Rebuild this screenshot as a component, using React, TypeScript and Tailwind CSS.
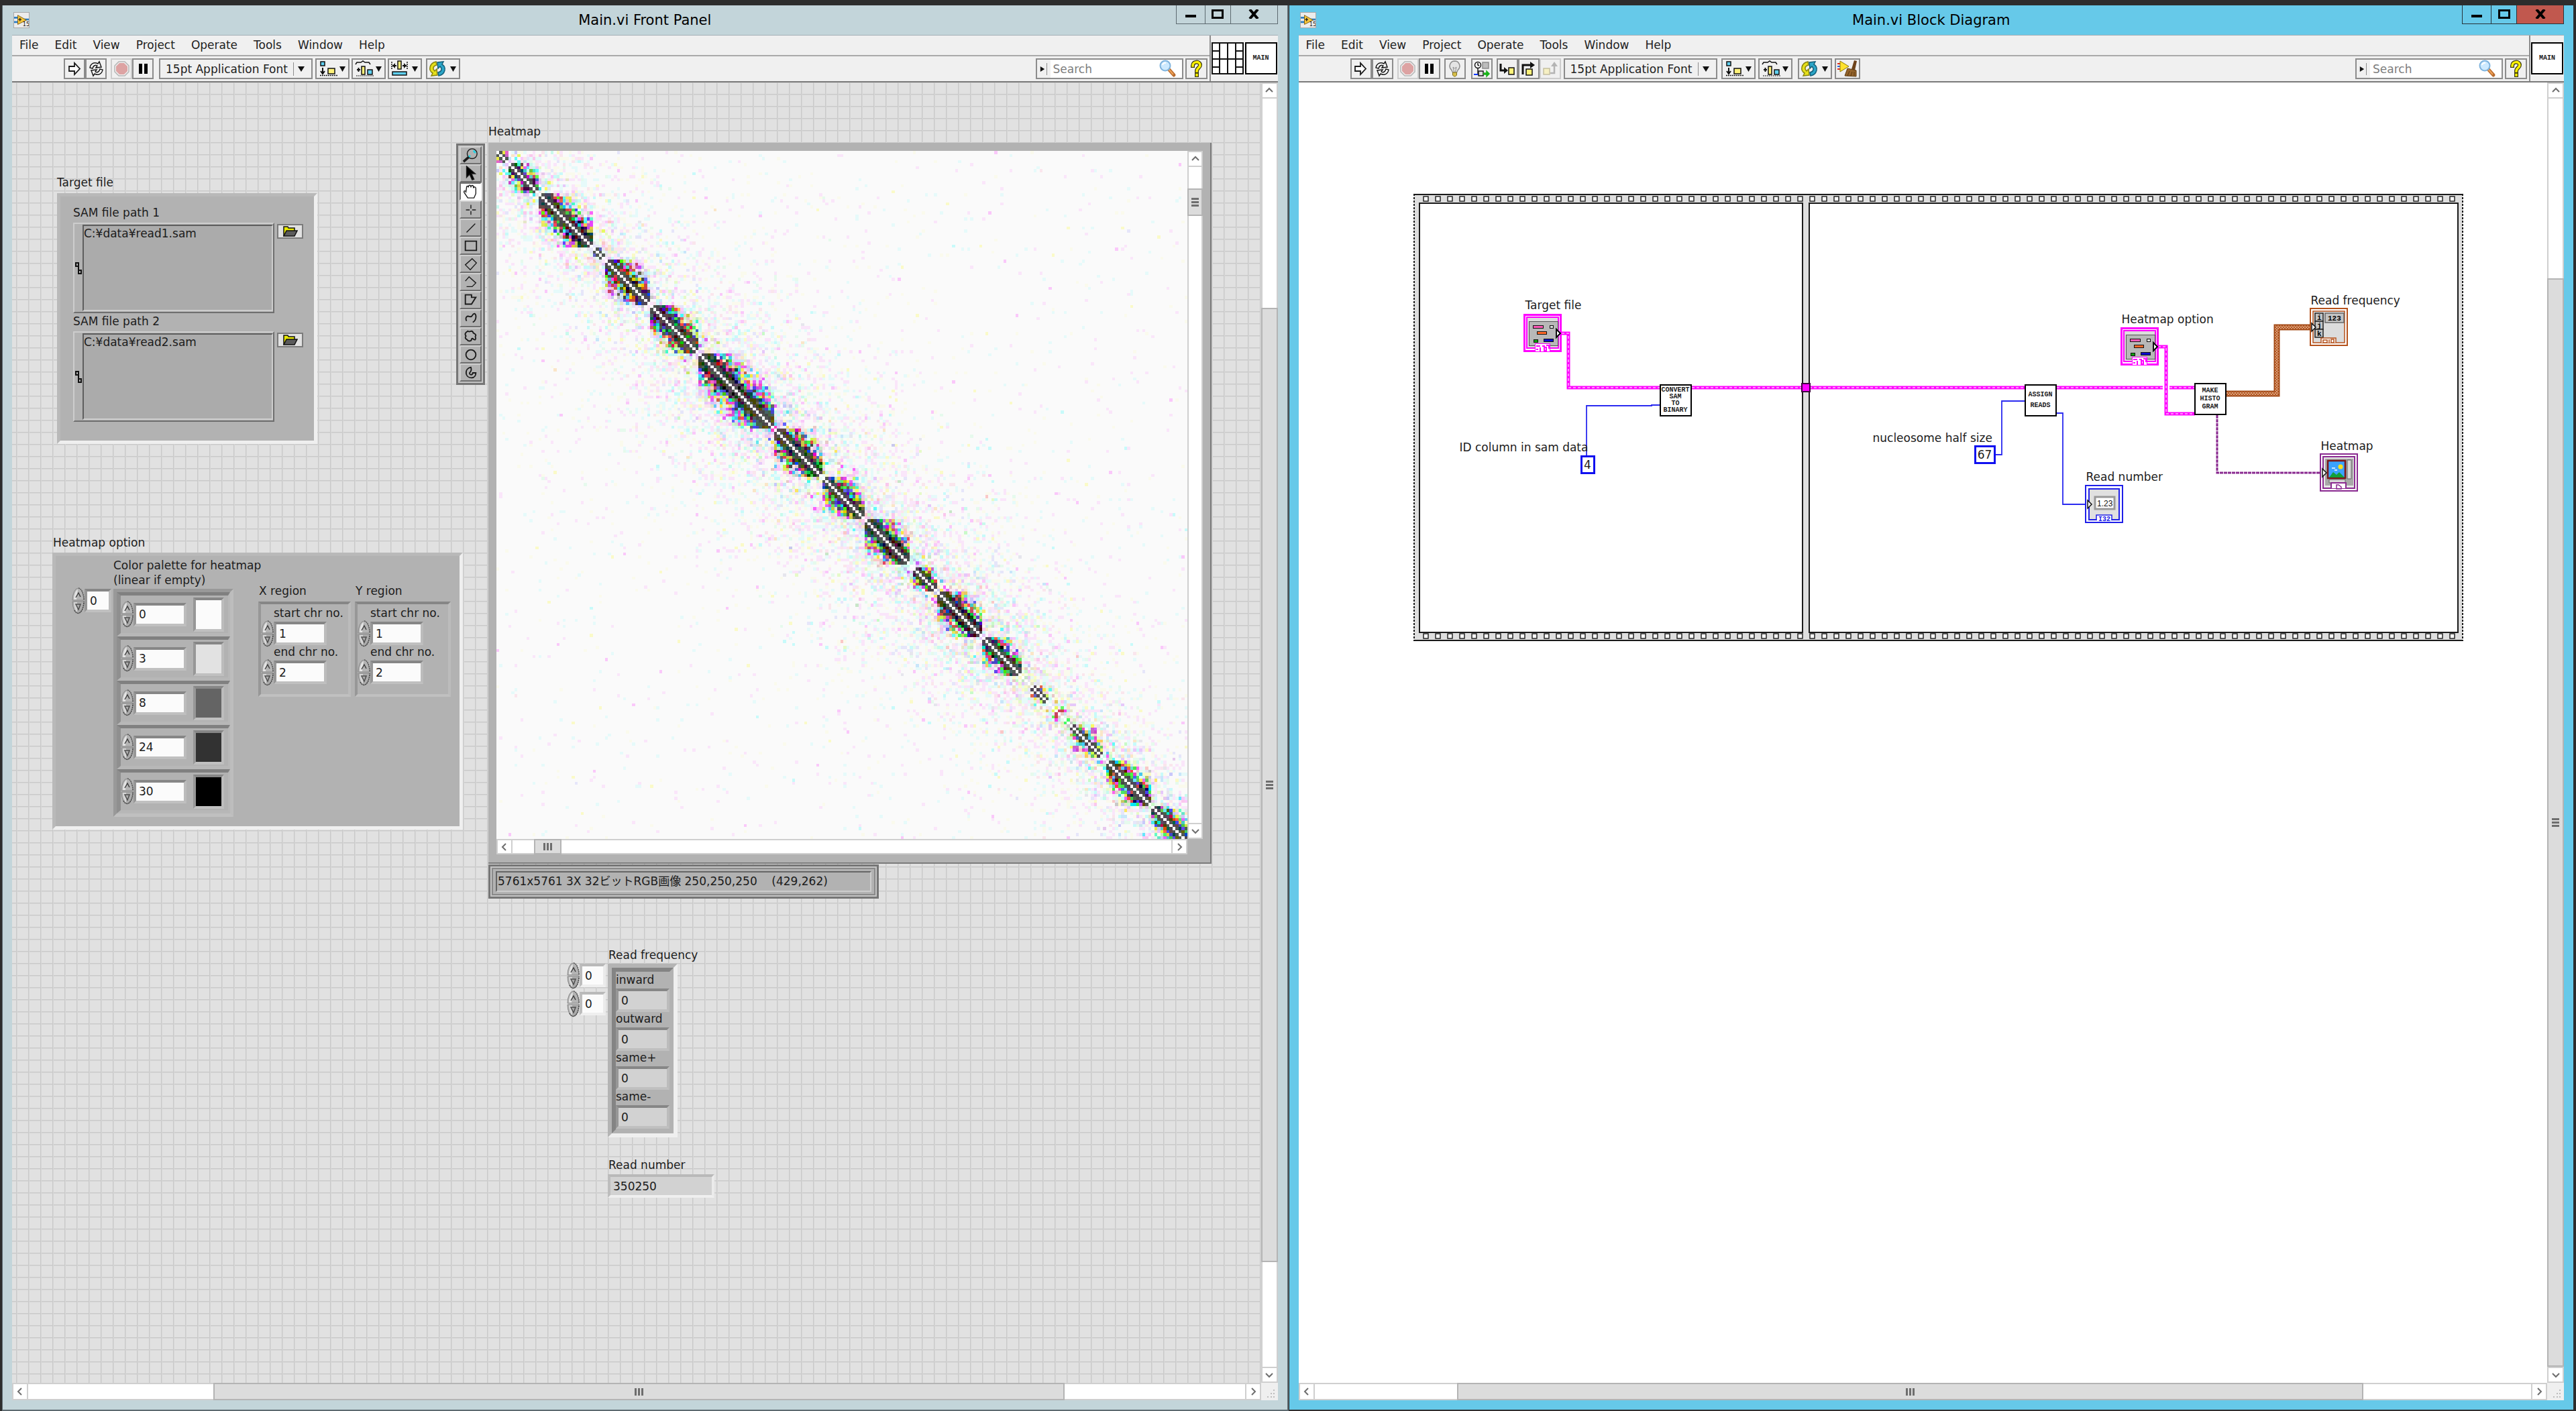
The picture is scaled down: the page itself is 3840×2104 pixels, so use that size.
import React, { useMemo } from "react";

type Kids = { children?: React.ReactNode };

/* ---------- heat map ---------- */

const COLS = 229;
const ROWS = 228;
const BLOCKS: [number, number, number][] = [
  [0, 3, 0.6], [4, 13, 0.9], [14, 31, 1], [32, 35, 0.5], [36, 50, 0.9], [51, 66, 0.9],
  [67, 91, 1.2], [92, 107, 1.1], [108, 121, 0.9], [122, 136, 1.25], [138, 145, 0.9],
  [146, 160, 1.2], [161, 173, 0.9], [177, 182, 0.5], [184, 189, 0.2], [190, 200, 0.5],
  [202, 216, 0.8], [217, 228, 0.9],
];

function makeRandom(seed: number) {
  let s = seed;
  return () => {
    s = (s + 0x6d2b79f5) | 0;
    let t = Math.imul(s ^ (s >>> 15), 1 | s);
    t = (t + Math.imul(t ^ (t >>> 7), 61 | t)) ^ t;
    return ((t ^ (t >>> 14)) >>> 0) / 4294967296;
  };
}

function level(v: number) {
  if (v < 1) return 250;
  if (v < 3) return 230;
  if (v < 6) return 200;
  if (v < 9) return 100;
  if (v < 26) return 70;
  return 4;
}

function buildHeatmap() {
  const rnd = makeRandom(42);
  const paths = new Map<string, string>();
  const put = (x: number, y: number, c: string) => {
    if (x < COLS && y < ROWS) paths.set(c, (paths.get(c) ?? "") + `M${x} ${y}h1v1h-1z`);
  };
  const blockOf = (i: number) => BLOCKS.findIndex(([a, b]) => i >= a && i <= b);
  for (let i = 0; i < COLS; i++) {
    for (let j = i; j < COLS; j++) {
      const d = j - i;
      const bi = blockOf(i);
      const same = bi >= 0 && bi === blockOf(j);
      if (d === 0) {
        put(i, i, "#ffffff");
        continue;
      }
      const mid = (i + j) / 2;
      const busy = mid > 60 && mid < 170 ? 1.4 : 0.9;
      let lam = 0.21 + 0.8 * busy * Math.exp(-d / 22) + 1.1 * Math.exp(-d / 7);
      if (same) {
        const [a, b, w] = BLOCKS[bi];
        const spread = Math.min(b - a, 15) * 0.2 + 1;
        lam += 29 * w * Math.exp(-Math.pow(d / spread, 1.2));
      }
      const rgb = [0, 1, 2].map((n) => {
        const u = -Math.log(1 - rnd() * 0.9999);
        let v = level(lam * (lam > 14 ? 0.3 + 0.7 * u : u));
        if (v === 230 && rnd() < 0.08) v = 200;
        return n === 2 && v === 230 ? 237 : v;
      });
      if (d === 1 && same && BLOCKS[bi][2] > 0.3) {
        rgb[0] = 82; rgb[1] = 72 + Math.floor(rnd() * 2) * 16; rgb[2] = 84;
      }
      if (rgb[0] === 250 && rgb[1] === 250 && rgb[2] === 250) continue;
      const c = `rgb(${rgb.join(",")})`;
      put(j, i, c);
      put(i, j, c);
    }
  }
  return [...paths.entries()];
}

function HeatmapImage() {
  const cells = useMemo(buildHeatmap, []);
  return (
    <svg role="img" aria-label="Heatmap" viewBox={`0 0 ${COLS} ${ROWS}`} preserveAspectRatio="none" shapeRendering="crispEdges" className="block h-[1026px] w-[1030px] bg-[#fafafa]">
      {cells.map(([c, d]) => (
        <path key={c} d={d} fill={c} />
      ))}
    </svg>
  );
}

/* ---------- scroll bars ---------- */

function Chevron({ dir }: { dir: "up" | "down" | "left" | "right" }) {
  const d = {
    up: "M2 9 L7 4 L12 9", down: "M2 5 L7 10 L12 5", left: "M9 2 L4 7 L9 12", right: "M5 2 L10 7 L5 12",
  }[dir];
  return (
    <svg viewBox="0 0 14 14" className="h-3.5 w-3.5" fill="none" stroke="#6e6e6e" strokeWidth="2">
      <path d={d} />
    </svg>
  );
}

function ScrollV({ before, thumb, after, label }: { before: number; thumb: number; after: number; label: string }) {
  return (
    <div role="group" aria-label={label} className="flex h-full w-full flex-col border-x-2 border-[#cfcfcf] bg-white">
      <button aria-label="Scroll up" className="flex h-[24px] shrink-0 items-center justify-center border-y-2 border-[#cfcfcf]"><Chevron dir="up" /></button>
      <div className="basis-0" style={{ flexGrow: before }} />
      <div style={{ flexGrow: thumb }} className="-mx-0.5 flex basis-0 flex-col items-center justify-center gap-0.5 border-2 border-[#b4b4b4] bg-[#dcdcdc]">
        <i className="h-[3px] w-[11px] bg-[#6e6e6e]" /><i className="h-[3px] w-[11px] bg-[#6e6e6e]" /><i className="h-[3px] w-[11px] bg-[#6e6e6e]" />
      </div>
      <div className="basis-0" style={{ flexGrow: after }} />
      <button aria-label="Scroll down" className="flex h-[24px] shrink-0 items-center justify-center border-y-2 border-[#cfcfcf]"><Chevron dir="down" /></button>
    </div>
  );
}

function ScrollH({ before, thumb, after, label }: { before: number; thumb: number; after: number; label: string }) {
  return (
    <div role="group" aria-label={label} className="flex h-full w-full border-y-2 border-[#cfcfcf] bg-white">
      <button aria-label="Scroll left" className="flex w-[24px] shrink-0 items-center justify-center border-x-2 border-[#cfcfcf]"><Chevron dir="left" /></button>
      <div className="basis-0" style={{ flexGrow: before }} />
      <div style={{ flexGrow: thumb }} className="-my-0.5 flex basis-0 items-center justify-center gap-0.5 border-2 border-[#b4b4b4] bg-[#dcdcdc]">
        <i className="h-[11px] w-[3px] bg-[#6e6e6e]" /><i className="h-[11px] w-[3px] bg-[#6e6e6e]" /><i className="h-[11px] w-[3px] bg-[#6e6e6e]" />
      </div>
      <div className="basis-0" style={{ flexGrow: after }} />
      <button aria-label="Scroll right" className="flex w-[24px] shrink-0 items-center justify-center border-x-2 border-[#cfcfcf]"><Chevron dir="right" /></button>
    </div>
  );
}

/* ---------- toolbar icons ---------- */

const ico = "h-[27px] w-[27px]";

const AppIcon = () => (
  <svg viewBox="0 0 24 24" className="ml-0.5 h-6 w-6 border border-[#a9a9a9] bg-[#ececec]">
    <path d="M0 8h9M0 15h9" stroke="#2f7fc4" strokeWidth="3" />
    <path d="M14 11h10" stroke="#2f7fc4" strokeWidth="3" />
    <path d="M6 4 20 12 6 19z" fill="#f5c63b" stroke="#7c5a10" />
    <path d="M7 11h5M9.500 8.500v5" stroke="#1d1d1d" strokeWidth="1.500" />
    <text x="14" y="22" fontSize="9" fontFamily="DejaVu Sans" fill="#111">15</text>
  </svg>
);
const RunIcon = () => (
  <svg viewBox="0 0 27 27" className={ico} fill="#fff" stroke="#1a1a1a" strokeWidth="1.800">
    <path d="M5 10h8V5l8 8.500L13 22v-5H5z" />
  </svg>
);
const RunLoopIcon = () => (
  <svg viewBox="0 0 27 27" className={ico} fill="#fff" stroke="#1a1a1a" strokeWidth="1.500">
    <path d="M4 12c1-6 6-9 12-6l2-3 3 8-8 1 2-3c-3-2-6 0-7 4z" />
    <path d="M23 15c-1 6-6 9-12 6l-2 3-3-8 8-1-2 3c3 2 6 0 7-4z" />
  </svg>
);
const StopIcon = () => (
  <svg viewBox="0 0 27 27" className={ico}>
    <path d="M9 3h9l6 6v9l-6 6H9l-6-6V9z" fill="#f0f0f0" stroke="#b5b5b5" strokeWidth="1.500" />
    <path d="M10 5h7l5 5v7l-5 5h-7l-5-5v-7z" fill="#dda3a3" />
  </svg>
);
const PauseIcon = () => (
  <svg viewBox="0 0 27 27" className={ico}><path d="M7 6h5v15H7zM15 6h5v15h-5z" fill="#000" /></svg>
);
const BulbIcon = () => (
  <svg viewBox="0 0 27 27" className={ico}>
    <path d="M13.500 2a7.500 7.500 0 0 0-5 13l2 4h6l2-4a7.500 7.500 0 0 0-5-13z" fill="#e4e4e4" stroke="#8d8d8d" strokeWidth="1.500" />
    <path d="M11 11l1.500 7M16 11l-1.500 7M11 11l2.500 2 2.500-2" fill="none" stroke="#8d8d8d" />
    <path d="M10.500 19h6v4l-2 2h-2l-2-2z" fill="#d8c04a" stroke="#80701f" />
  </svg>
);
const RetainIcon = () => (
  <svg viewBox="0 0 27 27" className={ico} fill="none" stroke="#1a1a1a" strokeWidth="1.500">
    <circle cx="8" cy="8" r="4.500" fill="#fff" /><path d="M8 5v3l2 1M8 13v8" />
    <rect x="15" y="4" width="9" height="9" fill="#bdbdbd" stroke="#8d8d8d" />
    <path d="M2 22h7" stroke="#1239ff" strokeWidth="2" /><rect x="9" y="17" width="7" height="7" fill="#ddd" />
    <path d="M17 20h4v-3l4 4-4 4v-3h-4z" fill="#18b418" stroke="#18b418" />
  </svg>
);
const StepIntoIcon = () => (
  <svg viewBox="0 0 27 27" className={ico}>
    <path d="M4 6v10h7" fill="none" stroke="#111" strokeWidth="3" /><path d="M9 11l6 5-6 5z" fill="#111" />
    <rect x="16" y="12" width="8" height="10" fill="#fff27a" stroke="#111" strokeWidth="1.500" />
  </svg>
);
const StepOverIcon = () => (
  <svg viewBox="0 0 27 27" className={ico}>
    <path d="M5 22V8h13" fill="none" stroke="#111" strokeWidth="3" /><path d="M16 3l7 5-7 5z" fill="#111" />
    <rect x="10" y="14" width="9" height="9" fill="#fff27a" stroke="#111" strokeWidth="1.500" />
  </svg>
);
const StepOutIcon = () => (
  <svg viewBox="0 0 27 27" className={ico}>
    <path d="M14 20h6V8" fill="none" stroke="#b4b4b4" strokeWidth="2.500" /><path d="M15 10l5-7 5 7z" fill="#b4b4b4" />
    <rect x="4" y="13" width="9" height="9" fill="#f6f0c3" stroke="#c4bfa0" strokeWidth="1.500" />
  </svg>
);
const Tri = <path d="M34 10h9l-4.500 8z" fill="#111" />;
const AlignIcon = () => (
  <svg viewBox="0 0 47 27" className="h-[27px] w-[47px] shrink-0">
    <rect x="6" y="3" width="6" height="6" fill="#5fd0f0" stroke="#111" strokeWidth="1.500" />
    <path d="M9 12v8M6 17l3 4 3-4" fill="none" stroke="#111" strokeWidth="2" />
    <path d="M5 23.500h26" stroke="#111" strokeDasharray="2 1" strokeWidth="1.500" />
    <rect x="17" y="13" width="10" height="8" fill="#fff27a" stroke="#111" strokeWidth="1.500" />{Tri}
  </svg>
);
const DistributeIcon = () => (
  <svg viewBox="0 0 47 27" className="h-[27px] w-[47px] shrink-0">
    <path d="M4 7l2-3h6l3-2 3 2h6l2 3" fill="none" stroke="#111" strokeWidth="1.500" />
    <path d="M6 15h5M8.500 12v6" stroke="#111" strokeWidth="2" /><rect x="13" y="10" width="5" height="12" fill="#fff27a" stroke="#111" strokeWidth="1.500" />
    <rect x="22" y="15" width="7" height="7" fill="#5fd0f0" stroke="#111" strokeWidth="1.500" /><path d="M5 24h26" stroke="#111" strokeDasharray="2 1" />{Tri}
  </svg>
);
const ResizeIcon = () => (
  <svg viewBox="0 0 47 27" className="h-[27px] w-[47px] shrink-0">
    <path d="M4 3v12M27 3v12" stroke="#111" strokeDasharray="2 1" strokeWidth="1.500" />
    <path d="M5 9h6M26 9h-6" stroke="#111" strokeWidth="2" /><path d="M9 5l-4 4 4 4zM22 5l4 4-4 4z" fill="#111" />
    <rect x="13" y="2" width="5" height="12" fill="#fff27a" stroke="#111" strokeWidth="1.500" />
    <rect x="5" y="18" width="21" height="5" fill="#5fd0f0" stroke="#111" strokeWidth="1.500" />{Tri}
  </svg>
);
const ReorderIcon = () => (
  <svg viewBox="0 0 47 27" className="h-[27px] w-[47px] shrink-0">
    <path d="M13 3C3 5 1 16 8 20L6 24l9-1-1-9-3 3C7 13 9 9 14 8z" fill="#e6e01a" stroke="#8a8610" strokeWidth="1.500" />
    <path d="M17 24c10-2 12-13 5-17l2-4-9 1 1 9 3-3c4 4 2 8-3 9z" fill="#2ba6c8" stroke="#14607a" strokeWidth="1.500" />{Tri}
  </svg>
);
const CleanIcon = () => (
  <svg viewBox="0 0 34 27" className="h-[27px] w-[34px] shrink-0">
    <path d="M2 6h8M2 14h8" stroke="#e2261c" strokeWidth="2" /><path d="M2 10h6" stroke="#2a62e0" strokeWidth="2" />
    <path d="M6 2l13 8-13 8z" fill="#ffe22e" stroke="#8f7a08" />
    <path d="M27 1l4 1-3 14-5-2z" fill="#6d431a" /><path d="M17 13l13 3v9l-17-1z" fill="#94642c" stroke="#5c3a10" />
    <path d="M20 17l-3 7M24 18l-2 6M27 18v6" stroke="#5c3a10" />
  </svg>
);
const Magnifier = () => (
  <svg viewBox="0 0 27 27" className={ico}>
    <path d="M15 14l8 9" stroke="#b96b2c" strokeWidth="5" strokeLinecap="round" /><path d="M15 14l7 8" stroke="#f0a35a" strokeWidth="2" />
    <circle cx="10" cy="9" r="7.500" fill="#cdeaff" stroke="#7fb3dd" strokeWidth="2" /><path d="M6 8a4 4 0 0 1 5-3" fill="none" stroke="#fff" strokeWidth="2" />
  </svg>
);
const HelpIcon = () => (
  <svg viewBox="0 0 27 27" className={ico} fill="none" strokeLinecap="square">
    <path d="M8 9c0-7 11-7 11-1 0 4-5 4-5 9M14 22.500v.500" stroke="#3b3b12" strokeWidth="6" />
    <path d="M8 9c0-7 11-7 11-1 0 4-5 4-5 9M14 22.500v.500" stroke="#fff200" strokeWidth="3.500" />
  </svg>
);

function Tool({ label, w = "w-8", faded = false, children }: Kids & { label: string; w?: string; faded?: boolean }) {
  return (
    <button aria-label={label} className={`${w} ${faded ? "border-[#cdcdcd]" : "border-[#8c8c8c]"} flex h-[31px] shrink-0 items-center justify-center border-2 bg-[#f0f0f0]`}>
      {children}
    </button>
  );
}

function FontSelect() {
  return (
    <div className="relative h-[31px] w-[229px] shrink-0 border-2 border-[#8c8c8c] bg-[#f0f0f0]">
      <select aria-label="Text settings" className="h-full w-full appearance-none bg-transparent pl-2 leading-[22px] text-[#222]">
        <option>15pt Application Font</option>
      </select>
      <span className="pointer-events-none absolute inset-y-0 right-0 flex w-[27px] items-center">
        <i className="h-5 w-px bg-[#8c8c8c]" />
        <svg viewBox="0 0 10 8" className="ml-1.5 h-2 w-2.5"><path d="M0 0h10l-5 8z" fill="#111" /></svg>
      </span>
    </div>
  );
}

function SearchBox() {
  return (
    <div className="mr-[3px] ml-auto flex items-center gap-[3px]">
      <div className="flex h-[31px] w-[220px] items-center border-2 border-[#8c8c8c] bg-white">
        <span className="flex h-full w-5 shrink-0 items-center bg-[#f0f0f0]">
          <svg viewBox="0 0 8 10" className="ml-1 h-2 w-2"><path d="M0 0v10l8-5z" fill="#111" /></svg>
          <i className="ml-0.5 h-[18px] w-px bg-[#8c8c8c]" />
        </span>
        <input aria-label="Search" placeholder="Search" className="w-0 grow bg-transparent pl-1 placeholder:text-[#7d7d7d]" />
        <span className="mr-2"><Magnifier /></span>
      </div>
      <Tool label="Show context help" w="w-[33px]"><HelpIcon /></Tool>
    </div>
  );
}

/* ---------- windows ---------- */

const MENUS = ["File", "Edit", "View", "Project", "Operate", "Tools", "Window", "Help"];

function WindowFrame({ title, active, toolbar, pane, children, hbar, vbar }: Kids & {
  title: string; active: boolean; toolbar: React.ReactNode; pane: React.ReactNode; hbar: React.ReactNode; vbar: React.ReactNode;
}) {
  return (
    <section aria-label={title} className={`${active ? "border-l border-[#2f2f2f] bg-[#66c9e9]" : "border-l border-r-2 border-[#5d6a70] bg-[#c3d5da]"} flex min-w-0 flex-1 flex-col border-b-2 px-3.5 pb-3.5`}>
      <header className="grid h-11 shrink-0 grid-cols-[1fr_auto_1fr] items-center">
        <AppIcon />
        <h1 className="text-[21px] leading-7 text-black">{title}</h1>
        <div className={`${active ? "border-[#27333a]" : "border-[#5d6a70]"} flex h-7 self-start justify-self-end border border-t-0`}>
          <button aria-label="Minimize" className="flex w-[42px] justify-center pt-3.5"><i className="h-1 w-4 bg-black" /></button>
          <button aria-label="Maximize" className="flex w-[39px] items-center justify-center border-x border-inherit"><i className="mb-0.5 h-3.5 w-[18px] border-[3px] border-black" /></button>
          <button aria-label="Close" className={`${active ? "bg-[#c1584e]" : ""} flex w-[69px] items-center justify-center`}>
            <svg viewBox="0 0 16 14" className="mb-0.5 h-3.5 w-4" stroke="#000" strokeWidth="4"><path d="M2 0l12 14M14 0L2 14" /></svg>
          </button>
        </div>
      </header>
      <div className="flex min-h-0 grow flex-col border-t border-[#a3afb6]">
        <div className="flex shrink-0 border-b-2 border-[#7a7a7a] bg-[#f0f0f0]">
          <div className="min-w-0 grow border-r-2 border-[#8c8c8c]">
            <nav aria-label="Menu" className="flex h-[31px] items-center gap-6 border-b-2 border-[#a9a9a9] pb-0.5 pl-[11px]">
              {MENUS.map((m) => <button key={m} className="leading-[22px] text-[#222]">{m}</button>)}
            </nav>
            <div role="toolbar" className="flex h-[37px] items-center pl-[77px]">{toolbar}<SearchBox /></div>
          </div>
          <div className="flex items-center gap-0.5 px-px">{pane}</div>
        </div>
        <div className="grid min-h-0 grow grid-cols-[1fr_25px] grid-rows-[1fr_26px]">
          {children}
          {vbar}
          {hbar}
          <div className="flex items-end justify-end bg-[#efefef] p-1">
            <svg viewBox="0 0 12 12" className="h-3 w-3" fill="#bdbdbd"><path d="M9 0h2v2H9zM5 5h2v2H5zM9 5h2v2H9zM0 10h2v2H0zM5 10h2v2H5zM9 10h2v2H9z" /></svg>
          </div>
        </div>
      </div>
    </section>
  );
}

const pixel = "font-['Liberation_Mono'] text-[10px] font-bold leading-[10px]";
const MainIcon = () => <div className={`${pixel} flex h-12 w-12 items-center justify-center border-2 border-black bg-white`}>MAIN</div>;
const ConnectorPane = () => (
  <svg viewBox="0 0 48 48" className="h-12 w-12 bg-white" fill="none" stroke="#111" strokeWidth="2">
    <path d="M1 1h46v46H1zM12 1v46M24 1v46M36 1v46M1 13h11M36 13h11M1 25h46M1 37h11M36 37h11" />
  </svg>
);

/* ---------- front panel controls ---------- */

const sunk = "border-4 border-t-[#868686] border-l-[#979797] border-b-[#c0c0c0] border-r-[#bcbcbc]";
const sunkLight = "border-4 border-t-[#b9b9b9] border-l-[#bdbdbd] border-b-[#efefef] border-r-[#ebebeb]";

function Spinner({ label }: { label: string }) {
  return (
    <span className="-my-1 flex h-[40px] w-[19px] shrink-0 flex-col">
      <button aria-label={`Increment ${label}`} className="block h-5">
        <svg viewBox="0 0 19 20" className="h-5 w-[19px]">
          <path d="M1 19A8.500 18 0 0 1 18 19z" fill="#b4b4b4" stroke="#8a8a8a" />
          <path d="M3 18A7 16 0 0 1 9 3l-2 15z" fill="#e4e4e4" />
          <path d="M10 1A8.500 18 0 0 1 18 19" fill="none" stroke="#555" strokeWidth="1.500" strokeDasharray="2 1" />
          <path d="M6 15l4-7 3 6" fill="none" stroke="#3f3f3f" strokeWidth="1.500" />
        </svg>
      </button>
      <button aria-label={`Decrement ${label}`} className="block h-5">
        <svg viewBox="0 0 19 20" className="h-5 w-[19px]">
          <path d="M1 1A8.500 18 0 0 0 18 1z" fill="#acacac" stroke="#8a8a8a" />
          <path d="M3 2A7 16 0 0 0 8 17V2z" fill="#d6d6d6" />
          <path d="M4 14A8.500 18 0 0 0 18 1" fill="none" stroke="#444" strokeWidth="1.500" strokeDasharray="2 1" />
          <path d="M13 5H6l4 8z" fill="none" stroke="#4c4c4c" strokeWidth="1.500" />
        </svg>
      </button>
    </span>
  );
}

function NumberBox({ id, label, value, w, light = false }: { id?: string; label: string; value: string; w: string; light?: boolean }) {
  return (
    <span className="flex items-center">
      <Spinner label={label} />
      <input id={id} aria-label={id ? undefined : label} defaultValue={value} className={`${w} ${light ? sunkLight : sunk} h-[35px] bg-[#fbfbfb] pl-1`} />
    </span>
  );
}

function Cluster({ w, h, children }: Kids & { w: string; h: string }) {
  return <div className={`${w} ${h} border-[5px] border-t-[#b9b9b9] border-l-[#b9b9b9] border-r-[#efefef] border-b-[#efefef] bg-[#b2b2b2]`}>{children}</div>;
}

function PathControl({ id, label, value }: { id: string; label: string; value: string }) {
  return (
    <div>
      <label htmlFor={id} className="block">{label}</label>
      <div className="mt-1 flex items-start gap-1">
        <div className="flex h-[135px] w-[300px] items-center border-2 border-t-[#cdcdcd] border-r-[#6f6f6f] border-b-[#6f6f6f] border-l-[#cdcdcd] bg-[#b2b2b2]">
          <svg viewBox="0 0 12 20" className="h-5 w-3" fill="none" stroke="#111" strokeWidth="2"><path d="M2 2h4v5H2zM6 13h4v5H6zM6 7v6" /></svg>
          <textarea id={id} defaultValue={value} className="h-[129px] grow resize-none overflow-hidden border-2 border-t-[#5e5e5e] border-r-[#cdcdcd] border-b-[#cdcdcd] border-l-[#5e5e5e] bg-[#ababab] leading-[22px]" />
        </div>
        <button aria-label={`Browse ${label}`} className="mt-0.5 flex h-[22px] w-[39px] items-center justify-center border-2 border-[#7b7b7b] bg-[#e2e2e2]">
          <svg viewBox="0 0 22 16" className="h-4 w-[22px]">
            <path d="M1 15V1h6l1 2h9v4" fill="#e9e900" stroke="#111" strokeWidth="1.500" />
            <path d="M1 15L5 7h16l-4 8z" fill="#5b5b5b" stroke="#111" strokeWidth="1.500" />
          </svg>
        </button>
      </div>
    </div>
  );
}

const PALETTE: [string, string, string][] = [
  ["0", "bg-[#fbfbfb]", "white"], ["3", "bg-[#e2e2e2]", "light gray"], ["8", "bg-[#646464]", "gray"],
  ["24", "bg-[#323232]", "dark gray"], ["30", "bg-black", "black"],
];

function Region({ axis, w }: { axis: "X" | "Y"; w: string }) {
  return (
    <div role="group" aria-labelledby={`${axis}-region`} className="pt-[39px]">
      <h3 id={`${axis}-region`} className="pl-px whitespace-nowrap">{axis} region</h3>
      <div className={`${w} ${sunk} mt-[5px] h-[142px] bg-[#b2b2b2] pt-0.5`}>
        {[["start", "1"], ["end", "2"]].map(([k, v]) => (
          <div key={k} className="h-[58px]">
            <label htmlFor={`${axis}-${k}`} className="block pl-[19px] whitespace-nowrap">{k} chr no.</label>
            <div className="pt-0.5"><NumberBox id={`${axis}-${k}`} label={`${axis} ${k}`} value={v} w="w-[79px]" /></div>
          </div>
        ))}
      </div>
    </div>
  );
}

const TOOLS: [string, React.ReactNode][] = [
  ["Zoom", <><circle cx="17" cy="10" r="8" /><path d="M12 13a6 6 0 0 0 2 2M19 5a6 6 0 0 1 3 4" stroke="#19d3e6" strokeWidth="3" /><path d="M11 16l-8 7" strokeWidth="4" /></>],
  ["Select", <path d="M8 1v18l5-5 4 9 3-1-4-9h6z" fill="#000" />],
  ["Pan", <path d="M10 23l-6-9c-1-3 2-3 3-1l1-7c0-3 3-3 3 0 0-5 4-5 4 0 0-5 5-4 4 1 1-3 4-2 4 1v8l-3 7z" fill="#fff" />],
  ["Point", <path d="M15 5v6M15 15v6M7 13h6M17 13h6" />],
  ["Line", <path d="M8 20L22 6" />],
  ["Rectangle", <path d="M6 5h18v15H6z" strokeWidth="2" />],
  ["Rotated rectangle", <path d="M6 14L17 4l7 7-10 11z" />],
  ["Broken line", <path d="M6 11l6-7 11 10-6 6H8" />],
  ["Polygon", <path d="M6 4h10v4h7l-7 11H6z" strokeWidth="2" />],
  ["Freehand line", <path d="M8 17c-3-6 1-9 5-7 6 1 3-5 8-5 4 3 2 12-3 14" strokeWidth="2" />],
  ["Freehand region", <path d="M10 4c3 3 5-2 8 1 0 4 5 2 5 6-3 3 2 4-1 7-3 1-4-4-6-1 0 4-6 4-7 1-3-1-4-4-2-6-3-4 0-6 3-8z" strokeWidth="2" />],
  ["Oval", <circle cx="15" cy="13" r="8" strokeWidth="2" />],
  ["Annulus", <path d="M15 4c-11 2-10 17 1 17 5 0 7-4 7-8h-5c0 4-6 4-5 0 1-2 4-3 2-9z" strokeWidth="2" />],
];

function ImagePalette() {
  return (
    <div role="toolbar" aria-label="Image tools" className="mt-px mr-[5px] h-[360px] w-[43px] shrink-0 border-[3px] border-[#767676] bg-[#c4c4c4] p-px pl-0.5">
      {TOOLS.map(([name, art]) => (
        <button key={name} aria-label={name} className={`${name === "Pan" ? "border-t-[#6f6f6f] border-l-[#6f6f6f] border-r-white border-b-white bg-white" : "border-t-[#cfcfcf] border-l-[#cfcfcf] border-r-[#6f6f6f] border-b-[#6f6f6f] bg-[#b2b2b2]"} block h-[27px] w-[33px] border-2`}>
          <svg viewBox="0 0 29 25" className="h-[23px] w-[29px]" fill="none" stroke="#1a1a1a" strokeWidth="1.500">{art}</svg>
        </button>
      ))}
    </div>
  );
}

function FrontPanel() {
  return (
    <main className="flex min-w-0 items-start overflow-hidden bg-[#e1e1e1] bg-[linear-gradient(to_right,#c9c9c9_1px,#d6d6d6_1px,#d6d6d6_2px,transparent_2px),linear-gradient(to_bottom,#c9c9c9_1px,#d6d6d6_1px,#d6d6d6_2px,transparent_2px)] bg-[size:18px_18px] bg-[position:6px_17px]">
      <div className="w-[662px] shrink-0 pt-[138px]">
        <section className="pl-[67px]">
          <h2>Target file</h2>
          <div className="mt-[5px]">
            <Cluster w="w-[388px]" h="h-[374px]">
              <div className="flex flex-col gap-px pt-[13px] pl-[19px]">
                <PathControl id="sam1" label="SAM file path 1" value="C:¥data¥read1.sam" />
                <PathControl id="sam2" label="SAM file path 2" value="C:¥data¥read2.sam" />
              </div>
            </Cluster>
          </div>
        </section>
        <section className="mt-[136px] pl-[60px]">
          <h2 className="pl-px">Heatmap option</h2>
          <div className="mt-1">
            <Cluster w="w-[612px]" h="h-[413px]">
              <div className="flex pt-[3px] pl-6">
                <div className="w-[62px] pt-[46px]"><NumberBox label="palette index" value="0" w="w-[40px]" /></div>
                <div className="w-[179px]">
                  <h3 className="whitespace-nowrap">Color palette for heatmap<br />(linear if empty)</h3>
                  <div className="mt-0.5 border-[5px] border-t-[#999] border-l-[#999] border-r-[#bdbdbd] border-b-[#c0c0c0]">
                    {PALETTE.map(([v, bg, name]) => (
                      <div key={v} className="flex h-[66px] items-center border-t-[5px] border-r-[3px] border-b-[5px] border-l-[6px] border-t-[#808080] border-l-[#8f8f8f] border-r-[#b8b8b8] border-b-[#b7b7b7] bg-[#b2b2b2]">
                        <NumberBox label={`Color palette value ${v}`} value={v} w="w-[79px]" />
                        <button aria-label={`Color ${name}`} className={`${sunk} ${bg} ml-2.5 h-[51px] w-[46px]`} />
                      </div>
                    ))}
                  </div>
                </div>
                <div className="-mt-px ml-[37px] flex gap-[6px]">
                  <Region axis="X" w="w-[138px]" />
                  <Region axis="Y" w="w-[143px]" />
                </div>
              </div>
            </Cluster>
          </div>
        </section>
      </div>

      <div className="shrink-0 pt-[62px]">
        <h2 className="pl-12">Heatmap</h2>
        <div className="mt-[6px] flex items-start">
          <ImagePalette />
          <div>
            <div className="grid w-[1078px] grid-cols-[1030px_23px] grid-rows-[1026px_23px] border-r-2 border-b-2 border-[#7b7b7b] bg-[#b2b2b2] pt-3 pb-3 pl-3">
              <HeatmapImage />
              <ScrollV label="Heatmap vertical scroll" before={32} thumb={37} after={906} />
              <ScrollH label="Heatmap horizontal scroll" before={32} thumb={37} after={906} />
            </div>
            <div className="mt-px w-[582px] border-[3px] border-[#767676] bg-[#c4c4c4] p-0.5">
              <div className="border-2 border-[#8a8a8a] bg-[#b2b2b2] px-1 py-[3px]">
                <div className="h-[31px] border-2 border-t-[#666] border-l-[#666] border-r-[#cdcdcd] border-b-[#cdcdcd] bg-[#b2b2b2] pl-px leading-[26px] whitespace-pre">5761x5761 3X 32ビットRGB画像 250,250,250    (429,262)</div>
              </div>
            </div>
          </div>
        </div>

        <section className="mt-[73px] flex pl-[165px]">
          <div className="flex w-[61px] flex-col gap-[7px] pt-6">
            <NumberBox label="row index" value="0" w="w-[39px]" light />
            <NumberBox label="column index" value="0" w="w-[39px]" light />
          </div>
          <div>
            <h2 className="pl-px">Read frequency</h2>
            <div className="mt-0.5 w-[104px] border-[6px] border-t-[#b4b4b4] border-l-[#b4b4b4] border-r-[#efefef] border-b-[#efefef]">
              <div className="border-[6px] border-t-[#848484] border-l-[#848484] border-r-[#b2b2b2] border-b-[#b2b2b2] bg-[#b2b2b2] pt-px pb-0.5">
                {["inward", "outward", "same+", "same-"].map((k) => (
                  <div key={k} className="h-[58px]">
                    <label htmlFor={`rf-${k}`} className="block">{k}</label>
                    <input id={`rf-${k}`} readOnly defaultValue="0" className={`${sunk} mt-0.5 block h-[35px] w-full bg-[#d2d2d2] pl-1`} />
                  </div>
                ))}
              </div>
            </div>
            <label htmlFor="read-number" className="mt-[30px] block pl-px">Read number</label>
            <input id="read-number" readOnly defaultValue="350250" className={`${sunkLight} mt-[3px] block h-[35px] w-[159px] bg-[#d2d2d2] pl-1`} />
          </div>
        </section>
      </div>
    </main>
  );
}

/* ---------- block diagram ---------- */

const PinkWire = ({ d }: { d: string }) => (
  <g fill="none"><path d={d} stroke="#ff00ff" strokeWidth="5" /><path d={d} stroke="#ffb8ff" strokeWidth="1.500" strokeDasharray="4 3" /></g>
);
const Arrow = ({ x }: { x: number }) => <path d={`M${x} 23v12l6-6z`} fill="#fff" stroke="#111" strokeWidth="1.500" />;

const ClusterGlyph = () => (
  <svg viewBox="0 0 57 57" className="h-[57px] w-[57px]" shapeRendering="crispEdges">
    <rect x="1.500" y="1.500" width="54" height="54" fill="#fff" stroke="#f0f" strokeWidth="3" />
    <rect x="5" y="5" width="47" height="46" fill="#dcdcdc" stroke="#f0f" strokeWidth="2" />
    <rect x="8" y="11" width="43" height="36" fill="#b8b8b8" stroke="#555" strokeWidth="1" />
    <rect x="14" y="17" width="15" height="4" fill="#ff5ab8" stroke="#111" strokeWidth="1" /><rect x="39" y="17" width="5" height="4" fill="#ddd" stroke="#111" strokeWidth="1" />
    <rect x="20" y="26" width="14" height="4" fill="#ff6a2a" stroke="#111" strokeWidth="1" /><rect x="15" y="38" width="6" height="4" fill="#10a010" stroke="#111" strokeWidth="1" />
    <rect x="30" y="37" width="14" height="4" fill="#0a0acc" stroke="#111" strokeWidth="1" />
    <path d="M17 44h22v12H17z" fill="#fff" stroke="#f0f" strokeWidth="1" /><path d="M19 48h6M28 48h4M34 47h4v5M19 53h3M25 50v6M31 50h3v5h-3z" stroke="#f0f" strokeWidth="2" fill="none" />
    <Arrow x={49} />
  </svg>
);
const FrequencyGlyph = () => (
  <svg viewBox="0 0 57 57" className="h-[57px] w-[57px]" fontFamily="Liberation Mono" fontWeight="bold" fontSize="11">
    <rect x="1" y="1" width="55" height="55" fill="#fff" stroke="#b5521c" strokeWidth="2" />
    <rect x="5" y="5" width="47" height="47" fill="#dcdcdc" stroke="#b5521c" strokeWidth="1.500" />
    <g fill="#c4c4c4" stroke="#222" strokeWidth="1.500"><rect x="8" y="8" width="12" height="12" /><rect x="8" y="20" width="12" height="12" /><rect x="8" y="32" width="12" height="12" /><rect x="23" y="8" width="28" height="14" stroke="#666" /></g>
    <text x="11" y="18">i</text><text x="11" y="30">j</text><text x="11" y="42">k</text><text x="27" y="19">123</text>
    <path d="M17 52v-7h22v7" fill="#fff" stroke="#b5521c" strokeWidth="1.500" /><path d="M20 48h6v4h-6zM29 47v6M32 47h4v5h-4z" fill="none" stroke="#b5521c" strokeWidth="1.500" />
    <Arrow x={3} />
  </svg>
);
const NumberGlyph = () => (
  <svg viewBox="0 0 57 57" className="h-[57px] w-[57px]" fontFamily="Liberation Sans">
    <rect x="1" y="1" width="55" height="55" fill="#fff" stroke="#2020e8" strokeWidth="2" />
    <rect x="6" y="6" width="45" height="46" fill="#e0e0e0" stroke="#2020e8" strokeWidth="2" />
    <rect x="15" y="18" width="29" height="18" fill="#fff" stroke="#999" strokeWidth="3" />
    <text x="18" y="32" fontSize="12" fill="#111">1.23</text>
    <path d="M17 52v-7h23v7" fill="#fff" stroke="#2020e8" strokeWidth="1.500" /><path d="M18 52h21" stroke="#fff" strokeWidth="2" /><text x="20" y="54" fontSize="10" fontWeight="bold" fontFamily="Liberation Mono" fill="#2020e8">I32</text>
    <Arrow x={4} />
  </svg>
);
const ImageGlyph = () => (
  <svg viewBox="0 0 57 57" className="h-[57px] w-[57px]">
    <rect x="1" y="1" width="55" height="55" fill="#fff" stroke="#8a2a90" strokeWidth="2" />
    <rect x="5" y="5" width="47" height="47" fill="#e6e6e6" stroke="#8a2a90" strokeWidth="2" />
    <path d="M8 8h42v40H8z" fill="#a8a8a8" /><path d="M41 10h6v28h-6zM14 39h24v5H14z" fill="#d8d8d8" stroke="#666" />
    <path d="M12 11h26v26H12z" fill="#3aa2ff" stroke="#7a1616" strokeWidth="2.500" /><circle cx="31" cy="20" r="3.500" fill="#ffe21a" />
    <path d="M14 36l6-8 5 4 4-4 8 8z" fill="#12a03a" /><path d="M18 22h5M22 25h4" stroke="#fff" strokeWidth="1.500" />
    <path d="M17 52v-8h22v8" fill="#fff" stroke="#8a2a90" strokeWidth="2" /><path d="M25 47h3l4 3v3h-7z" fill="none" stroke="#8a2a90" strokeWidth="1.500" />
    <Arrow x={4} />
  </svg>
);

function SubVi({ at, lines, gap }: { at: string; lines: string[]; gap: string }) {
  return (
    <div className={`${at} ${pixel} ${gap} absolute flex h-12 w-12 flex-col items-center justify-center border-2 border-black bg-white`}>
      {lines.map((l) => <span key={l}>{l}</span>)}
    </div>
  );
}

function BlockDiagram() {
  return (
    <main className="min-w-0 overflow-hidden bg-white">
      <div className="relative mt-[166px] ml-[171px] h-[667px] w-[1565px]">
        <svg viewBox="0 0 1565 667" className="absolute inset-0 h-full w-full">
          <defs>
            <pattern id="film" x="13" width="18" height="14" patternUnits="userSpaceOnUse">
              <rect x="2" y="4" width="7" height="7" fill="#fff" stroke="#222" strokeWidth="1.500" />
            </pattern>
            <pattern id="mesh" width="4" height="4" patternUnits="userSpaceOnUse"><rect width="4" height="4" fill="#b5561f" /><path d="M0 0h2v2H0zM2 2h2v2H2z" fill="#dba482" /></pattern>
          </defs>
          <rect x="1" y="1" width="1563" height="665" fill="#dedede" />
          <path d="M0 1H1565M0 666H1565" stroke="#1a1a1a" strokeWidth="2" />
          <path d="M1 0V667M1564 0V667" stroke="#1a1a1a" strokeWidth="2" strokeDasharray="3 2" />
          <rect x="9" y="0" width="1546" height="14" fill="url(#film)" />
          <g transform="translate(0 652)"><rect x="9" width="1546" height="14" fill="url(#film)" /></g>
          <path d="M9 14H580V654H9zM590 14H1557V654H590z" fill="#fff" stroke="#1a1a1a" strokeWidth="2" />
          <PinkWire d="M221 208H231V289H367" />
          <PinkWire d="M415 289H911M959 289H1164" />
          <rect x="1117" y="284" width="10" height="10" fill="#fff" />
          <PinkWire d="M1110 228H1122V328H1165" />
          <rect x="579" y="283" width="12" height="12" fill="#f0f" stroke="#400040" strokeWidth="2" />
          <g fill="none" stroke="#2a2af0" strokeWidth="1.800">
            <path d="M367 315H355V316H258V390M911 309H877V389H867M959 327H968V463H1002" />
          </g>
          <path d="M1212 298H1287V199H1336" fill="none" stroke="#a34a17" strokeWidth="9" />
          <path d="M1212 298H1287V199H1336" fill="none" stroke="url(#mesh)" strokeWidth="5" />
          <path d="M1198 330V416H1351" fill="none" stroke="#8a2a90" strokeWidth="3" strokeDasharray="5 1" />
        </svg>
        <span className="absolute top-[155px] left-[167px] whitespace-nowrap">Target file</span>
        <div className="absolute top-[179px] left-[164px]"><ClusterGlyph /></div>
        <label htmlFor="id-col" className="absolute top-[367px] left-[69px] whitespace-nowrap">ID column in sam data</label>
        <input id="id-col" defaultValue="4" className="absolute top-[390px] left-[249px] h-7 w-[22px] border-[3px] border-[#1010f0] bg-white text-center" />
        <SubVi at="left-[367px] top-[284px]" gap="gap-0" lines={["CONVERT", "SAM", "TO", "BINARY"]} />
        <label htmlFor="half" className="absolute top-[353px] left-[685px] whitespace-nowrap">nucleosome half size</label>
        <input id="half" defaultValue="67" className="absolute top-[375px] left-[836px] h-7 w-8 border-[3px] border-[#1010f0] bg-white text-center" />
        <SubVi at="left-[911px] top-[284px]" gap="gap-1.5" lines={["ASSIGN", "READS"]} />
        <span className="absolute top-[411px] left-[1003px] whitespace-nowrap">Read number</span>
        <div className="absolute top-[434px] left-[1001px]"><NumberGlyph /></div>
        <span className="absolute top-[176px] left-[1056px] whitespace-nowrap">Heatmap option</span>
        <div className="absolute top-[199px] left-[1054px]"><ClusterGlyph /></div>
        <SubVi at="left-[1164px] top-[282px]" gap="gap-0.5" lines={["MAKE", "HISTO", "GRAM"]} />
        <span className="absolute top-[148px] left-[1338px] whitespace-nowrap">Read frequency</span>
        <div className="absolute top-[170px] left-[1336px]"><FrequencyGlyph /></div>
        <span className="absolute top-[365px] left-[1353px] whitespace-nowrap">Heatmap</span>
        <div className="absolute top-[387px] left-[1351px]"><ImageGlyph /></div>
      </div>
    </main>
  );
}

/* ---------- page ---------- */

export default function App() {
  return (
    <div className="flex h-screen flex-col bg-[#2d2d2d] pt-2 font-['DejaVu_Sans','Noto_Sans_CJK_JP',sans-serif] text-[17px] leading-[22px] text-[#1c1c1c]">
      <div className="flex min-h-0 grow pr-1 pl-[3px]">
        <WindowFrame
          title="Main.vi Front Panel"
          active={false}
          pane={<><ConnectorPane /><MainIcon /></>}
          toolbar={
            <>
              <Tool label="Run"><RunIcon /></Tool>
              <Tool label="Run continuously"><RunLoopIcon /></Tool>
              <span className="w-1.5" />
              <Tool label="Abort execution" faded><StopIcon /></Tool>
              <Tool label="Pause"><PauseIcon /></Tool>
              <span className="w-2" />
              <FontSelect />
              <div className="ml-1 flex gap-[3px]">
                <Tool label="Align objects" w="w-[51px]"><AlignIcon /></Tool>
                <Tool label="Distribute objects" w="w-[51px]"><DistributeIcon /></Tool>
                <Tool label="Resize objects" w="w-[51px]"><ResizeIcon /></Tool>
                <span />
                <Tool label="Reorder" w="w-[51px]"><ReorderIcon /></Tool>
              </div>
            </>
          }
          vbar={<ScrollV label="Vertical scroll" before={312} thumb={1422} after={156} />}
          hbar={<ScrollH label="Horizontal scroll" before={277} thumb={1268} after={269} />}
        >
          <FrontPanel />
        </WindowFrame>
        <WindowFrame
          title="Main.vi Block Diagram"
          active
          pane={<MainIcon />}
          toolbar={
            <>
              <Tool label="Run"><RunIcon /></Tool>
              <Tool label="Run continuously"><RunLoopIcon /></Tool>
              <span className="w-1.5" />
              <Tool label="Abort execution" faded><StopIcon /></Tool>
              <Tool label="Pause"><PauseIcon /></Tool>
              <span className="w-1.5" />
              <Tool label="Highlight execution"><BulbIcon /></Tool>
              <span className="w-2" />
              <Tool label="Retain wire values"><RetainIcon /></Tool>
              <span className="w-1.5" />
              <Tool label="Step into"><StepIntoIcon /></Tool>
              <Tool label="Step over"><StepOverIcon /></Tool>
              <Tool label="Step out" faded><StepOutIcon /></Tool>
              <span className="w-1" />
              <FontSelect />
              <div className="ml-1.5 flex gap-1">
                <Tool label="Align objects" w="w-[51px]"><AlignIcon /></Tool>
                <Tool label="Distribute objects" w="w-[51px]"><DistributeIcon /></Tool>
                <span />
                <Tool label="Reorder" w="w-[51px]"><ReorderIcon /></Tool>
                <Tool label="Clean up diagram" w="w-[38px]"><CleanIcon /></Tool>
              </div>
            </>
          }
          vbar={<ScrollV label="Vertical scroll" before={268} thumb={1622} after={0} />}
          hbar={<ScrollH label="Horizontal scroll" before={213} thumb={1350} after={250} />}
        >
          <BlockDiagram />
        </WindowFrame>
      </div>
    </div>
  );
}
